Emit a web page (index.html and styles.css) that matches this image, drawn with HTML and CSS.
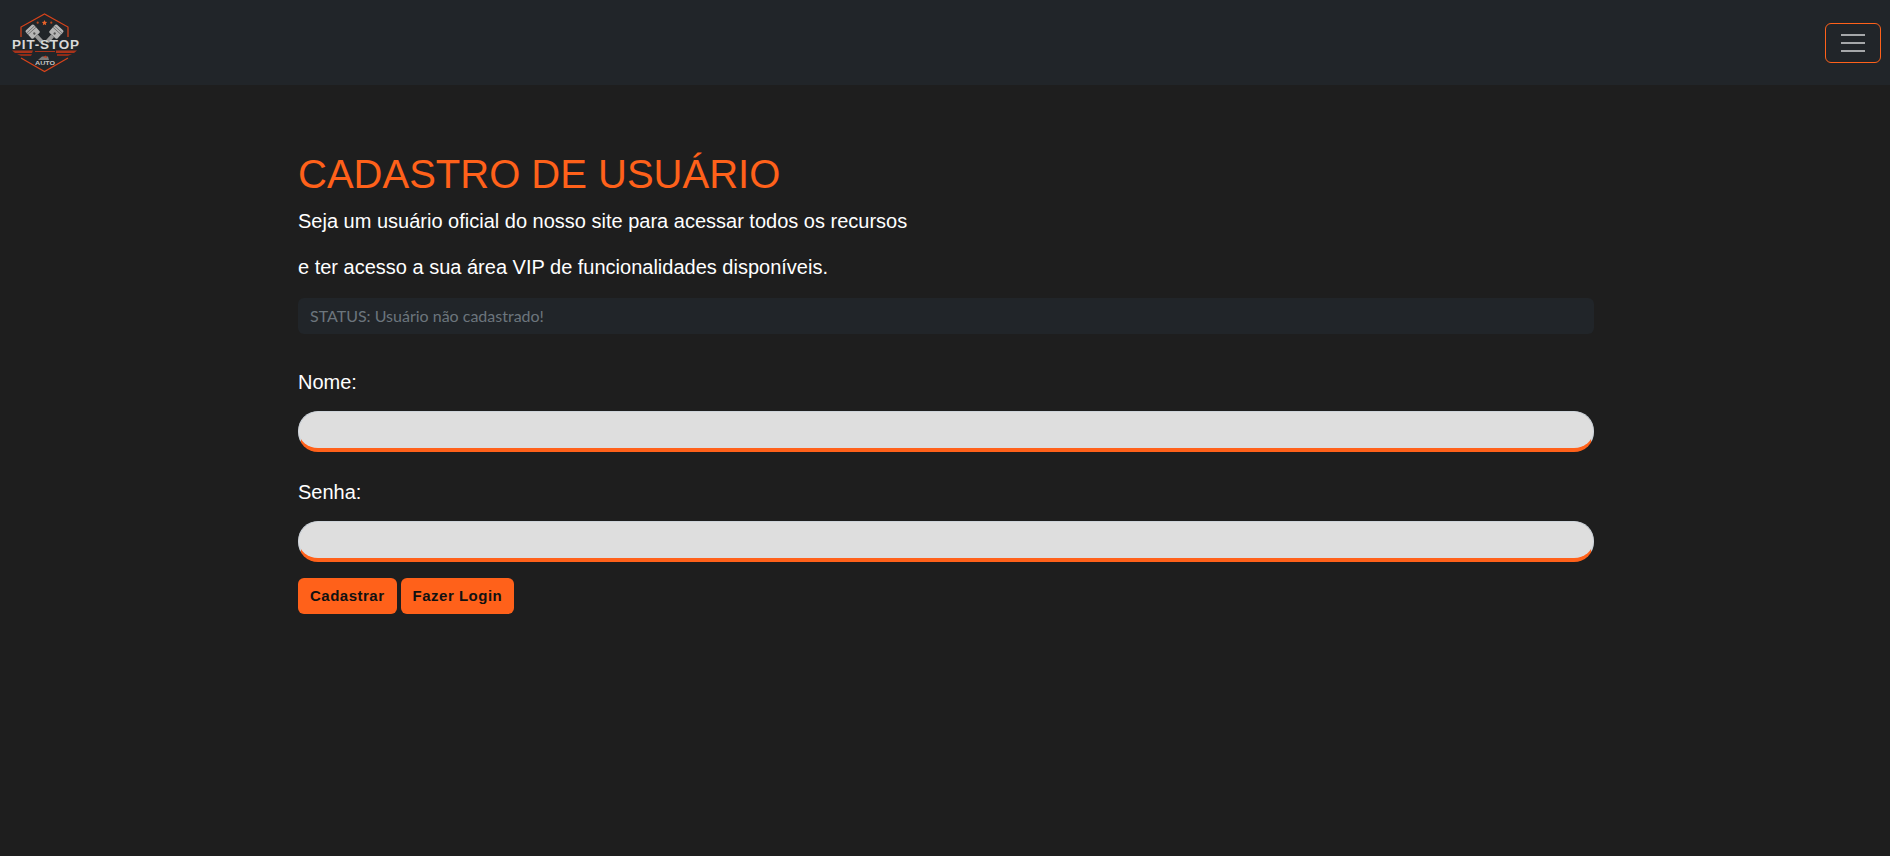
FILE: index.html
```html
<!DOCTYPE html>
<html lang="pt-BR">
<head>
<meta charset="utf-8">
<title>Cadastro de Usuário</title>
<link rel="stylesheet" href="styles.css">
</head>
<body>
<nav class="navbar">
  <a class="brand" href="#" aria-label="Pit-Stop Auto">
    <svg class="logo" viewBox="0 0 90 85" width="90" height="85">
      <path d="M21 37V27L44.500 14 68 27V37" fill="none" stroke="#d8431a" stroke-width="1.200"/>
      <path d="M21 58L44.500 71.500 68 58" fill="none" stroke="#d8431a" stroke-width="1.200"/>
      <path d="M44.500 20l.8 1.800 1.900.2-1.400 1.300.4 1.900-1.700-1-1.700 1 .4-1.900-1.400-1.300 1.900-.2z" fill="#e8622a"/>
      <circle cx="37.700" cy="22.700" r="1.100" fill="#b8481f"/>
      <circle cx="51.300" cy="22.700" r="1.100" fill="#b8481f"/>
      <g transform="rotate(-42 33 32)">
        <rect x="27.500" y="26" width="11" height="11" rx="1.500" fill="#b5b5b5"/>
        <path d="M27.500 28.500h11M27.500 30.500h11" stroke="#5e5e5e" stroke-width=".7"/>
        <rect x="31" y="37" width="4" height="8" fill="#999"/>
        <circle cx="33" cy="34" r="1.200" fill="#555"/>
      </g>
      <g transform="rotate(42 56 32)">
        <rect x="50.500" y="26" width="11" height="11" rx="1.500" fill="#b5b5b5"/>
        <path d="M50.500 28.500h11M50.500 30.500h11" stroke="#5e5e5e" stroke-width=".7"/>
        <rect x="54" y="37" width="4" height="8" fill="#999"/>
        <circle cx="56" cy="34" r="1.200" fill="#555"/>
      </g>
      <text class="logo-title" x="12" y="49" textLength="67" lengthAdjust="spacing">PIT-STOP</text>
      <path d="M12 50.500h21l-1 2.500H15zM35 51h20v1H35zM56 50.500h21l-3 2.500H56z" fill="#a8331a"/>
      <path d="M17 54h15l-1 2H21zM57 54h15l-4 2H57z" fill="#8f2c18"/>
      <path d="M38 60l4-3.500h6l1 3.500z" fill="#7a7a7a"/>
      <path d="M43 57l3-1.500 1 2.500z" fill="#c23c1c"/>
      <text class="logo-sub" x="35" y="64.500" textLength="20" lengthAdjust="spacingAndGlyphs">AUTO</text>
    </svg>
  </a>
  <button class="toggler" type="button" aria-label="Menu">
    <svg viewBox="0 0 30 30" width="30" height="30"><path d="M3 7h24M3 15h24M3 23h24" stroke="#a5a7a9" stroke-width="2" fill="none"/></svg>
  </button>
</nav>
<main class="container">
  <h1 class="title">CADASTRO DE USUÁRIO</h1>
  <p class="lead">Seja um usuário oficial do nosso site para acessar todos os recursos</p>
  <p class="lead">e ter acesso a sua área VIP de funcionalidades disponíveis.</p>
  <div class="status">STATUS: Usuário não cadastrado!</div>
  <form class="form">
    <div class="field">
      <label class="label" for="nome">Nome:</label>
      <input class="input" id="nome" type="text">
    </div>
    <div class="field">
      <label class="label" for="senha">Senha:</label>
      <input class="input" id="senha" type="password">
    </div>
    <div class="actions">
      <button class="btn" type="button">Cadastrar</button>
      <button class="btn" type="button">Fazer Login</button>
    </div>
  </form>
</main>
</body>
</html>
```
FILE: styles.css
```css
* { box-sizing: border-box; }
html, body { height: 100%; }
body {
  margin: 0;
  background: #1e1e1e;
  color: #fff;
  font-family: "Liberation Sans", Arial, sans-serif;
  font-size: 20px;
  overflow: hidden;
}
.navbar {
  height: 85px;
  background: #212529;
  display: flex;
  align-items: center;
  justify-content: space-between;
  padding: 0 9px 0 0;
}
.brand { display: block; line-height: 0; }
.logo { display: block; }
.logo-title {
  font-family: "Liberation Sans", sans-serif;
  font-weight: 700;
  font-size: 13.500px;
  fill: #d8d8d8;
}
.logo-sub {
  font-family: "Liberation Sans", sans-serif;
  font-weight: 700;
  font-size: 5px;
  fill: #c4c4c4;
}
.toggler {
  width: 56px;
  height: 40px;
  padding: 0;
  background: transparent;
  border: 1px solid #ff611a;
  border-radius: 6px;
  display: flex;
  align-items: center;
  justify-content: center;
}
.container {
  width: 1296px;
  margin: 0 auto;
  padding-top: 65px;
  transform: translateX(1px);
}
.title {
  margin: 0 0 8px;
  font-size: 40px;
  line-height: 48px;
  font-weight: 400;
  color: #ff611a;
}
.lead {
  margin: 0 0 16px;
  font-size: 20px;
  line-height: 30px;
}
.status {
  height: 36px;
  margin-bottom: 33px;
  padding: 6px 12px;
  background: #212529;
  border-radius: 6px;
  color: #6c757d;
  font-family: Lato, sans-serif;
  font-size: 16px;
  line-height: 24px;
}
.field { margin-bottom: 25px; }
.field + .field { margin-bottom: 16px; }
.label {
  display: block;
  margin-bottom: 14px;
  font-size: 20px;
  line-height: 30px;
}
.input {
  display: block;
  width: 100%;
  height: 41px;
  padding: 6px 12px;
  background: #dedede;
  border: 1px solid #ced4da;
  border-bottom: 4px solid #ff611a;
  border-radius: 20px;
  outline: none;
}
.actions { display: flex; gap: 4px; }
.btn {
  height: 36px;
  padding: 6px 12px;
  background: #ff611a;
  border: 0;
  border-radius: 6px;
  color: #111;
  font-family: "Liberation Sans", Arial, sans-serif;
  font-weight: 700;
  font-size: 15px;
  letter-spacing: .5px;
  line-height: 24px;
}
```
